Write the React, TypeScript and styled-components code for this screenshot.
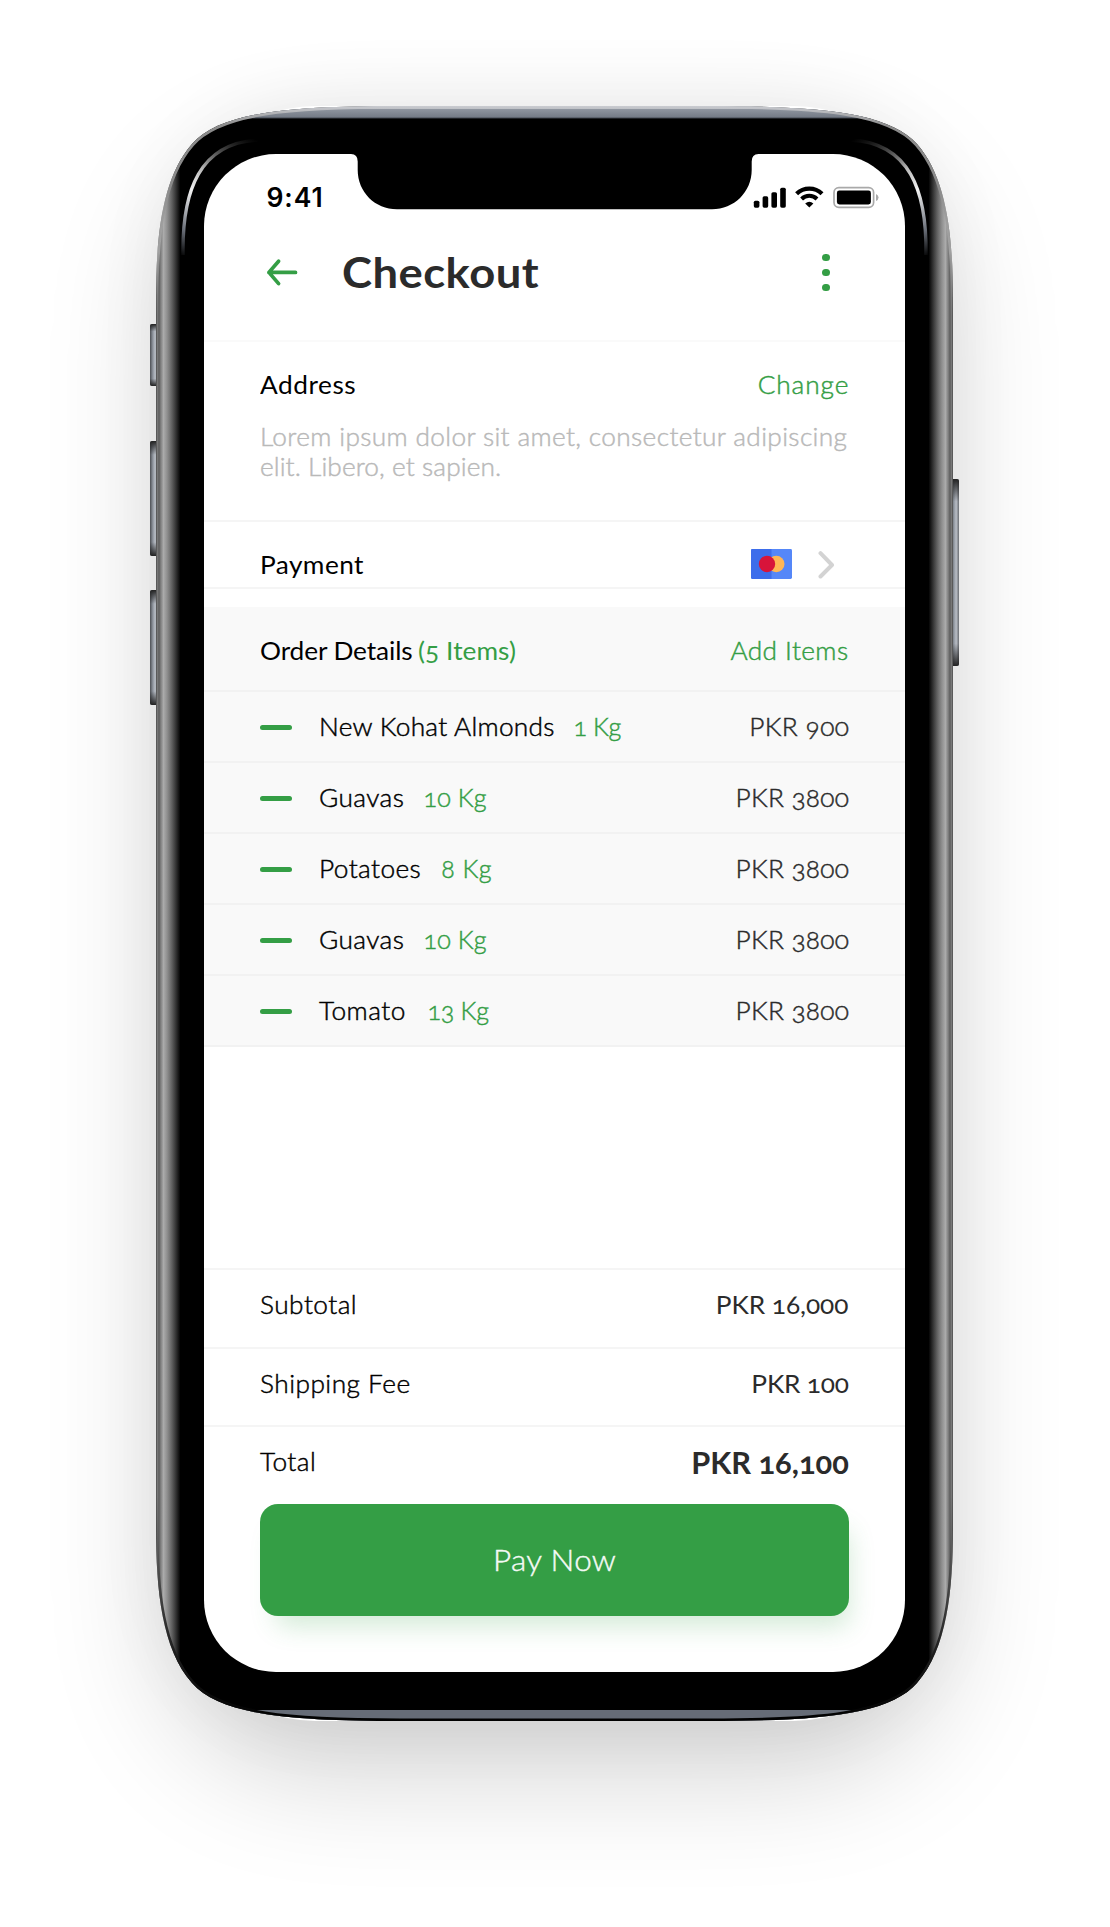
import React from 'react';
import styled, { createGlobalStyle } from 'styled-components';

const GREEN = '#349e45';
const INK = '#2b2b2b';
const LINE = '#f5f5f5';

const GlobalStyle = createGlobalStyle`
  *, *::before, *::after { box-sizing: border-box; }
  body {
    margin: 0;
    background: #fff;
    font-family: Lato, "Open Sans", sans-serif;
    font-variant-numeric: oldstyle-nums;
  }
`;

const Stage = styled.div`
  width: 1110px;
  height: 1927px;
  padding: 106px 0 0 156px;
  overflow: hidden;
  background: #fff;
`;

const Phone = styled.div`
  position: relative;
  width: 797px;
  height: 1615px;
  padding: 48px 48px 49px;
  display: flex;
  &::before {
    content: '';
    position: absolute;
    inset: 0 10px;
    border-radius: 150px;
    box-shadow: 0 50px 120px rgba(0, 0, 0, 0.18), 0 0 80px rgba(0, 0, 0, 0.06);
  }
`;

const Shell = styled.svg`
  position: absolute;
  left: -6px;
  top: 0;
  display: block;
`;

const Screen = styled.main`
  position: relative;
  flex: 1;
  display: flex;
  flex-direction: column;
  overflow: hidden;
  border-radius: 72px;
  background: #fff;
`;

const Notch = styled.svg`
  position: absolute;
  left: 147px;
  top: 0;
`;

const StatusBar = styled.div`
  display: flex;
  justify-content: space-between;
  height: 55px;
  padding: 32px 26px 0 62.5px;
`;

const Clock = styled.span`
  font: 600 26.5px/22px Inter, sans-serif;
  font-variant-numeric: normal;
  letter-spacing: 0.9px;
  color: #000;
`;

const StatusIcons = styled.svg`
  display: block;
`;

const Header = styled.header`
  display: flex;
  align-items: center;
  height: 133px;
  padding: 0 75px 5px 61px;
  border-bottom: 2px solid #fafafa;
`;

const Title = styled.h1`
  flex: 1;
  margin: 0 0 0 44px;
  font-size: 42px;
  line-height: 50px;
  font-weight: 700;
  letter-spacing: 0.45px;
  color: ${INK};
  transform: scaleX(1.08);
  transform-origin: left center;
`;

const Dots = styled.div`
  display: grid;
  gap: 7.2px;
  margin-top: 1px;
`;

const Dot = styled.i`
  width: 7.8px;
  height: 7.8px;
  border-radius: 50%;
  background: ${GREEN};
`;

type TextProps = { $ls?: number; $color?: string; $medium?: boolean; $end?: boolean; $stretch?: number };

const Text = styled.span<TextProps>`
  display: block;
  font-size: 25px;
  line-height: 30px;
  white-space: pre;
  font-weight: ${(p) => (p.$medium ? 400 : 300)};
  -webkit-text-stroke: ${(p) => (p.$medium ? '0' : '0.45px')};
  color: ${(p) => p.$color ?? '#000'};
  letter-spacing: ${(p) => p.$ls ?? 0}px;
  margin-right: ${(p) => -(p.$ls ?? 0)}px;
  transform: scaleX(${(p) => p.$stretch ?? 1.05});
  transform-origin: ${(p) => (p.$end ? 'right' : 'left')} center;
`;

const Between = styled.div`
  display: flex;
  justify-content: space-between;
`;

const AddressBlock = styled.section`
  height: 180px;
  padding: 27px 56.5px 0 56px;
  border-bottom: 2px solid ${LINE};
`;

const AddressText = styled.p`
  display: flex;
  flex-direction: column;
  margin: 22px 0 0;
`;

const PaymentRow = styled.section`
  display: flex;
  align-items: flex-start;
  height: 67px;
  padding: 27px 70px 0 56px;
  border-bottom: 2px solid ${LINE};
`;

const PaymentLabel = styled.div`
  flex: 1;
`;

const CardIcon = styled.svg`
  margin-right: 26.5px;
`;

const Order = styled.section`
  margin-top: 18px;
  background: #f9f9f9;
`;

const OrderHead = styled(Between)`
  height: 85px;
  padding: 28px 56.5px 0 56px;
  border-bottom: 2px solid #f2f2f2;
`;

const OrderTitle = styled.div`
  display: flex;
  gap: 13px;
`;

const Item = styled.div`
  display: flex;
  align-items: center;
  height: 71px;
  padding: 0 56.5px 1px 56px;
  border-bottom: 2px solid #f2f2f2;
`;

const Dash = styled.i`
  width: 32px;
  height: 5px;
  margin: 2px 26.8px 0 0;
  border-radius: 2.5px;
  background: ${GREEN};
`;

const Quantity = styled.div<{ $gap: number }>`
  flex: 1;
  margin-left: ${(p) => p.$gap}px;
`;

const Summary = styled.section`
  margin-top: auto;
`;

const SummaryRow = styled(Between)`
  height: 78.5px;
  padding: 19px 56.5px 0 56px;
  border-top: 2px solid ${LINE};
`;

const TotalAmount = styled.strong`
  margin-top: 1px;
  font-size: 30px;
  line-height: 30px;
  font-weight: 700;
  color: ${INK};
  transform: scaleX(1.025);
  transform-origin: right center;
`;

const PayButton = styled.button`
  display: flex;
  align-items: center;
  justify-content: center;
  width: 588.5px;
  height: 112.5px;
  margin: 0 56px 56px;
  padding: 0 0 2px;
  border: 0;
  border-radius: 18px;
  background: ${GREEN};
  color: #f4faf5;
  box-shadow: 8px 18px 26px -8px rgba(52, 158, 69, 0.22);
`;

const PayLabel = styled.span`
  font: 300 30px/36px Lato, sans-serif;
  -webkit-text-stroke: 0.4px;
  letter-spacing: 0.3px;
  transform: scaleX(1.05);
`;

const OUTLINE =
  'M6 194 C6 130 12 72 42 38 C70 6 140 0 250 0 H559 C669 0 739 6 767 38 C797 72 803 130 803 194 ' +
  'V1421 C803 1485 797 1543 767 1577 C739 1609 669 1615 559 1615 H250 C140 1615 70 1609 42 1577 C12 1543 6 1485 6 1421 Z';

const GLINT = 'M33 149 C32 84 50 37 108 34';

const sideButtons = [
  { x: 0, y: 218, h: 62 },
  { x: 0, y: 335, h: 115 },
  { x: 0, y: 484, h: 115 },
  { x: 801, y: 373, h: 187 },
];

const sideStops: [number, string][] = [
  [0, '#4a4a4a'], [1.5, '#777'], [3, '#5c5c5c'], [4.6, '#7c7c7c'], [7.5, '#ababab'],
  [11, '#909090'], [15, '#6a6a6a'], [20, '#333'], [24.5, '#000'],
];

function PhoneShell() {
  return (
    <Shell width="810" height="1615" viewBox="0 0 810 1615">
      <defs>
        <clipPath id="outline"><path d={OUTLINE} /></clipPath>
        <linearGradient id="sides" gradientUnits="userSpaceOnUse" x1="6" x2="803" y1="0" y2="0">
          {sideStops.map(([o, c]) => <stop key={'l' + o} offset={o / 797} stopColor={c} />)}
          {[...sideStops].reverse().map(([o, c]) => <stop key={'r' + o} offset={1 - o / 797} stopColor={c} />)}
        </linearGradient>
        <linearGradient id="topBand" x1="0" x2="0" y1="0" y2="1">
          <stop offset="0" stopColor="#c6c8cd" /><stop offset=".2" stopColor="#bfc2c8" />
          <stop offset=".26" stopColor="#8f959f" /><stop offset=".85" stopColor="#767d88" />
          <stop offset="1" stopColor="#3f444c" />
        </linearGradient>
        <linearGradient id="rim" gradientUnits="userSpaceOnUse" x1="0" x2="0" y1="0" y2="1615">
          <stop offset="0" stopColor="#c9cbd0" /><stop offset=".012" stopColor="#8b8b8b" />
          <stop offset=".05" stopColor="#8a8a8a" /><stop offset=".09" stopColor="#b0b0b0" stopOpacity=".8" />
          <stop offset=".13" stopColor="#888" stopOpacity="0" />
          <stop offset=".86" stopColor="#444" stopOpacity="0" /><stop offset=".92" stopColor="#444" />
          <stop offset=".96" stopColor="#1c1c1c" /><stop offset="1" stopColor="#000" />
        </linearGradient>
        <linearGradient id="glint" gradientUnits="userSpaceOnUse" x1="30" x2="100" y1="150" y2="30">
          <stop offset="0" stopColor="#6c717b" stopOpacity="0" /><stop offset=".18" stopColor="#6c717b" />
          <stop offset=".45" stopColor="#f2f2f2" /><stop offset=".62" stopColor="#bbb" />
          <stop offset="1" stopColor="#555" stopOpacity="0" />
        </linearGradient>
        <linearGradient id="key" x1="0" x2="1" y1="0" y2="0">
          <stop offset="0" stopColor="#4c4f54" /><stop offset=".35" stopColor="#8d939c" />
          <stop offset=".65" stopColor="#b9bec6" /><stop offset="1" stopColor="#6a6d72" />
        </linearGradient>
        <linearGradient id="keyEnds" x1="0" x2="0" y1="0" y2="1">
          <stop offset="0" stopColor="#222" /><stop offset=".12" stopColor="#222" stopOpacity="0" />
          <stop offset=".88" stopColor="#222" stopOpacity="0" /><stop offset="1" stopColor="#222" />
        </linearGradient>
      </defs>
      {sideButtons.map((b) => (
        <g key={b.y}>
          <rect x={b.x} y={b.y} width="8" height={b.h} rx="2" fill="url(#key)" />
          <rect x={b.x} y={b.y} width="8" height={b.h} rx="2" fill="url(#keyEnds)" />
        </g>
      ))}
      <g clipPath="url(#outline)">
        <rect width="810" height="1615" fill="url(#sides)" />
        <rect x="60" width="689" height="12.5" fill="url(#topBand)" />
        <rect x="60" y="1604" width="689" height="11" fill="#666c77" />
        <path d={OUTLINE} fill="none" stroke="url(#rim)" strokeWidth="5" />
      </g>
      <path d={GLINT} fill="none" stroke="url(#glint)" strokeWidth="3.4" />
      <path d={GLINT} fill="none" stroke="url(#glint)" strokeWidth="3.4" transform="translate(809 0) scale(-1 1)" />
    </Shell>
  );
}

const items = [
  { name: 'New Kohat Almonds', ls: 0.27, qty: '1 Kg', gap: 30.5, qls: -0.4, price: 'PKR 900', pls: 0.35 },
  { name: 'Guavas', ls: 0.4, qty: '10 Kg', gap: 24, qls: 0.1, price: 'PKR 3800', pls: 0.22 },
  { name: 'Potatoes', ls: 0.4, qty: '8 Kg', gap: 25.5, qls: 0.5, price: 'PKR 3800', pls: 0.22 },
  { name: 'Guavas', ls: 0.4, qty: '10 Kg', gap: 24, qls: 0.1, price: 'PKR 3800', pls: 0.22 },
  { name: 'Tomato', ls: 0.48, qty: '13 Kg', gap: 26.3, qls: -0.2, price: 'PKR 3800', pls: 0.22 },
];

const totals = [
  { label: 'Subtotal', ls: 0.45, amount: 'PKR 16,000', als: -0.05 },
  { label: 'Shipping Fee', ls: 0.45, amount: 'PKR 100', als: -0.2 },
];

export default function App() {
  return (
    <>
      <GlobalStyle />
      <Stage>
        <Phone>
          <PhoneShell />
          <Screen>
            <Notch width="408" height="56" viewBox="0 0 408 56">
              <path d="M0 0 Q6.7 0 6.7 7.5 V16 C6.7 38 24 55.3 46 55.3 H361 C383 55.3 400.7 38 400.7 16 V7.5 Q400.7 0 407.5 0 Z" fill="#000" />
            </Notch>
            <StatusBar>
              <Clock>9:41</Clock>
              <StatusIcons width="126" height="23" viewBox="0 0 126 23">
                <rect x=".8" y="14.7" width="5.6" height="7" rx="1.6" />
                <rect x="9.6" y="10.3" width="5.6" height="11.4" rx="1.6" />
                <rect x="18.4" y="6.2" width="5.6" height="15.5" rx="1.6" />
                <rect x="27.2" y="1.7" width="5.6" height="20" rx="1.6" />
                <path d="M43.6 7.8 A18.4 18.4 0 0 1 69 7.8" fill="none" stroke="#000" strokeWidth="4.3" />
                <path d="M48.6 13 A11 11 0 0 1 64 13" fill="none" stroke="#000" strokeWidth="4" />
                <path d="M52.2 17.6 A6.3 6.3 0 0 1 60.4 17.6 L56.3 21.6 Z" />
                <rect x="81" y="1.7" width="39.6" height="19.6" rx="4.8" fill="none" stroke="#a9a9a9" strokeWidth="1.7" />
                <rect x="83.9" y="4.6" width="34" height="13.8" rx="2.4" />
                <path d="M123 8 q2.5 1 2.5 3.5 q0 2.5 -2.5 3.5 z" fill="#a9a9a9" />
              </StatusIcons>
            </StatusBar>
            <Header>
              <svg width="33" height="30" viewBox="0 0 33 30" fill="none" stroke={GREEN} strokeWidth="3.7" strokeLinecap="round" strokeLinejoin="round">
                <path d="M30.5 15.4 H3.9 M13.6 4.2 L3.9 15.4 L13.6 26.6" />
              </svg>
              <Title>Checkout</Title>
              <Dots><Dot /><Dot /><Dot /></Dots>
            </Header>
            <AddressBlock>
              <Between>
                <Text $medium $ls={0.5}>Address</Text>
                <Text $color={GREEN} $ls={0.85} $end>Change</Text>
              </Between>
              <AddressText>
                <Text $color="#b9b9b9" $ls={0.33}>Lorem ipsum dolor sit amet, consectetur adipiscing</Text>
                <Text $color="#b9b9b9" $ls={0.08}>elit. Libero, et sapien.</Text>
              </AddressText>
            </AddressBlock>
            <PaymentRow>
              <PaymentLabel><Text $medium $ls={0.4}>Payment</Text></PaymentLabel>
              <CardIcon width="41" height="30" viewBox="0 0 41 30">
                <rect width="41" height="30" rx="1.4" fill="#5587f8" />
                <path d="M20.5 0 H1.4 Q0 0 0 1.4 V28.6 Q0 30 1.4 30 H20.5 Z" fill="#3d6deb" />
                <circle cx="25.3" cy="15" r="8.2" fill="#ffb655" />
                <circle cx="16" cy="15" r="8.2" fill="#d8143a" />
              </CardIcon>
              <svg width="17" height="30" viewBox="0 0 17 30" fill="none" stroke="#d3d3d3" strokeWidth="4" strokeLinecap="round" strokeLinejoin="round">
                <path d="M2.5 4.2 L14 16 L2.5 27.5" />
              </svg>
            </PaymentRow>
            <Order>
              <OrderHead>
                <OrderTitle>
                  <Text $medium $ls={-0.1}>Order Details</Text>
                  <Text $medium $color={GREEN} $ls={0.06}>(5 Items)</Text>
                </OrderTitle>
                <Text $color={GREEN} $ls={0.4} $end>Add Items</Text>
              </OrderHead>
              {items.map((it, i) => (
                <Item key={i}>
                  <Dash />
                  <Text $ls={it.ls}>{it.name}</Text>
                  <Quantity $gap={it.gap}><Text $color={GREEN} $ls={it.qls} $stretch={1}>{it.qty}</Text></Quantity>
                  <Text $color={INK} $ls={it.pls} $end>{it.price}</Text>
                </Item>
              ))}
            </Order>
            <Summary>
              {totals.map((t) => (
                <SummaryRow key={t.label}>
                  <Text $ls={t.ls}>{t.label}</Text>
                  <Text $color={INK} $medium $ls={t.als} $end>{t.amount}</Text>
                </SummaryRow>
              ))}
              <SummaryRow>
                <Text $ls={0.45}>Total</Text>
                <TotalAmount>PKR 16,100</TotalAmount>
              </SummaryRow>
            </Summary>
            <PayButton><PayLabel>Pay Now</PayLabel></PayButton>
          </Screen>
        </Phone>
      </Stage>
    </>
  );
}
